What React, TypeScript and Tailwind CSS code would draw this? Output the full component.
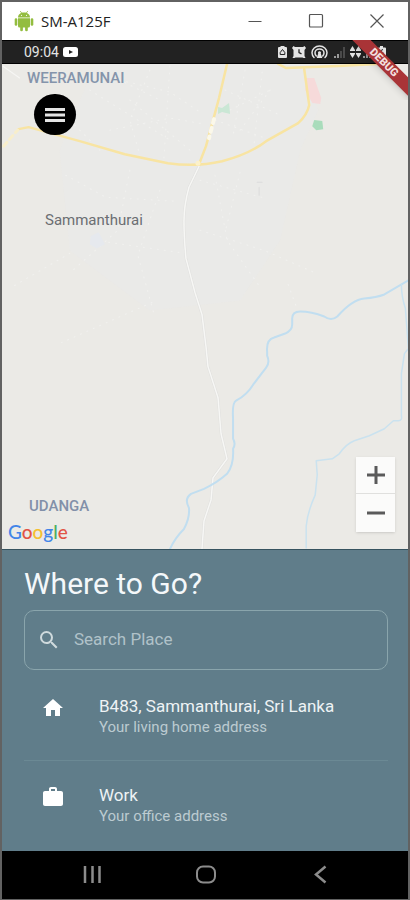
import { useState } from "react";
import { MdHome, MdSearch, MdWork } from "react-icons/md";
import type { IconType } from "react-icons";

type Place = {
  icon: IconType;
  title: string;
  subtitle: string;
};

const places: Place[] = [
  { icon: MdHome, title: "B483, Sammanthurai, Sri Lanka", subtitle: "Your living home address" },
  { icon: MdWork, title: "Work", subtitle: "Your office address" },
];

function AndroidRobot() {
  return (
    <svg className="h-[22px] w-5" viewBox="0 0 20 22" fill="#93bd3f">
      <path d="M6.2 1l1.600 2.200M13.800 1l-1.600 2.200" stroke="#93bd3f" strokeWidth=".8" />
      <path d="M4 7.500C4 4.500 6.500 2.500 10 2.500s6 2 6 5z" />
      <path d="M4 8.300h12V16a1.500 1.500 0 01-1.500 1.500h-9A1.500 1.500 0 014 16z" />
      <rect x=".7" y="8.200" width="2.600" height="7.500" rx="1.300" />
      <rect x="16.700" y="8.200" width="2.600" height="7.500" rx="1.300" />
      <rect x="6.200" y="15" width="2.700" height="6.300" rx="1.300" />
      <rect x="11.100" y="15" width="2.700" height="6.300" rx="1.300" />
      <circle cx="7.500" cy="5.300" r=".6" fill="#fff" />
      <circle cx="12.500" cy="5.300" r=".6" fill="#fff" />
    </svg>
  );
}

function TitleBar() {
  return (
    <header className="flex h-[38px] items-center justify-between bg-white pl-3 pr-[23px]">
      <div className="flex items-center gap-[7px]">
        <AndroidRobot />
        <h1 className="font-['Open_Sans',sans-serif] text-[15px] leading-5 text-[#222]">SM-A125F</h1>
      </div>
      <div className="flex items-center gap-[45px] text-[#555]">
        <button type="button" aria-label="Minimize">
          <svg className="size-4" viewBox="0 0 16 16" fill="none" stroke="currentColor">
            <path d="M1.5 8.5h13" />
          </svg>
        </button>
        <button type="button" aria-label="Maximize">
          <svg className="size-4" viewBox="0 0 16 16" fill="none" stroke="currentColor">
            <rect x="1.5" y="1.500" width="13" height="12.500" rx="1" strokeWidth="1.2" />
          </svg>
        </button>
        <button type="button" aria-label="Close">
          <svg className="size-4" viewBox="0 0 16 16" fill="none" stroke="currentColor">
            <path d="M1.5 1.5l13 13M14.5 1.5l-13 13" strokeWidth="1.2" />
          </svg>
        </button>
      </div>
    </header>
  );
}

function StatusBar() {
  return (
    <div className="flex h-6 items-center justify-between border-y border-black bg-[#222] pl-[22px] pr-5 text-[#e4e4e4]">
      <div className="flex items-center gap-1">
        <span className="text-sm leading-5">09:04</span>
        <svg className="h-[10px] w-[15px]" viewBox="0 0 15 10">
          <rect width="15" height="10" rx="2.5" fill="#fff" />
          <path d="M6 3l4 2-4 2z" fill="#222" />
        </svg>
      </div>
      <svg className="h-[14px] w-[111px]" viewBox="0 0 111 14" fill="currentColor">
        {/* battery saver */}
        <path d="M3.500 1h4v1H9a1 1 0 011 1v9a1 1 0 01-1 1H2a1 1 0 01-1-1V3a1 1 0 011-1h1.500z" />
        <path d="M5.500 4.500l2.300 3v2H3.200v-2z" fill="none" stroke="#222" />
        {/* alarm */}
        <path d="M18 2h8l1.500-1 1.500 2-1.500 2v6l1 2h-2l-1-.5h-7l-1 .5h-2l1-2V5L15 3l1.500-2z" />
        <path d="M22 4.200v3.300l2.500 1.300" fill="none" stroke="#222" strokeWidth="1.3" />
        {/* hotspot */}
        <g fill="none" stroke="currentColor" strokeWidth="1.500" strokeLinecap="round">
          <path d="M37 12.500a6.800 6.800 0 01-2-4.700 7.500 6.800 0 0115 0 6.800 6.800 0 01-2 4.700" />
          <path d="M39.300 11a4.500 4.500 0 01-1.300-3 4.500 4 0 019 0 4.500 4.500 0 01-1.300 3" />
        </g>
        <path d="M42.500 6.300a1.500 1.500 0 011.300 2.300l1.500 4.400h-5.600l1.500-4.400a1.500 1.500 0 011.300-2.300z" />
        {/* signal 1 */}
        <path d="M57 11h2v2h-2zM60 9h2v4h-2z" fill="#999" />
        <path d="M63 6h2v7h-2zM66 2h2v11h-2z" fill="#4a4a4a" />
        {/* data arrows */}
        <path d="M73 5l2.500-4L78 5v1h-5zM79 5l2.500-4L84 5v1h-5zM73 9l2.500 4L78 9V8h-5zM79 9l2.500 4L84 9V8h-5z" />
        {/* signal 2 */}
        <path d="M86 11h2v2h-2zM89 9h2v4h-2zM92 6h2v7h-2z" fill="#999" />
        {/* battery */}
        <path d="M103 1h3v1.500h2a1 1 0 011 1V12a1 1 0 01-1 1h-6a1 1 0 01-1-1V3.500a1 1 0 011-1h1z" />
        <path d="M105.500 4l-2 4h3l-2 4" fill="none" stroke="#222" />
      </svg>
    </div>
  );
}

function DebugBanner() {
  return (
    <div className="pointer-events-none absolute right-0 top-0 size-[60px] overflow-hidden">
      <div className="absolute -right-[26px] top-4 w-[100px] rotate-45 bg-[#a93437] text-center text-[11px] font-black leading-[13px] text-[#f3dede] shadow-md">
        DEBUG
      </div>
    </div>
  );
}

function MapArt() {
  return (
    <svg
      className="absolute inset-0 size-full"
      viewBox="2 64 406 484"
      preserveAspectRatio="xMidYMid slice"
      fill="none"
      strokeLinecap="round"
      strokeLinejoin="round"
    >
      <rect x="2" y="64" width="406" height="484" fill="#ebeae6" />
      <path d="M95 64H300L318 110 300 150 280 240 240 300 150 310 70 250 60 150z" fill="#eaeaea" opacity=".6" />

      {/* side streets */}
      <g stroke="#f1f1ef" strokeDasharray="1 6">
        <path d="M60 110l40 40M120 80l50 12 30 20M150 70l-20 50 10 35M110 130l60-12 35 6M215 120l50 18M225 90l55 25M245 70l-12 65M262 72l-8 72M170 66l-6 92" />
        <path d="M90 90l80 50M100 70l60 30M130 100l60 50M230 110l40-20M240 130l30-40" />
        <path d="M66 175l40 22 70 4M130 170l-12 60-45 40M160 190l-22 65 16 58M200 180l65 18M215 175l12 65 34 48M240 172l-14 56M200 230l64 20 50 22M288 284l8 22M15 285l55-32M95 240l84 12M152 302l-90 40" />
      </g>
      <path d="M3 66l17 12" stroke="#f6f6f4" />
      <path d="M257 182h5M259 187v8" stroke="#dcdcdc" />
      <path d="M91 236l8-4 6 12-8 4-7-4z" fill="#e6e9ee" />

      {/* parks and hospital */}
      <path d="M306 78l8 0 7 20-1 6-8-1-7-13z" fill="#f6dada" />
      <path d="M314 120l8 1 1 8-7 1-4-4z" fill="#a9dcbb" />
      <path d="M218 107l4 1 7-5 1 11-8-2-4 2z" fill="#cae7d5" />

      {/* main roads */}
      <path d="M200 164l-11 23q-5 18-5 34t2 37l9 34 7 22 4 32 2 20 10 31 3 36 6 25-14 19-2 22-7 21-2 28" stroke="#e0e0de" strokeWidth="2.500" />
      <path d="M200 164l-11 23q-5 18-5 34t2 37l9 34 7 22 4 32 2 20 10 31 3 36 6 25-14 19-2 22-7 21-2 28" stroke="#f7f7f5" strokeWidth="1.500" />
      <g stroke="#f8e4a2" strokeWidth="2.500">
        <path d="M19 129l10-2 51 14 45 13 43 9q28 4 54-2 27-7 44-20l32-18q9-8 11-18l-5-36" />
        <path d="M278 64l8 4 52-2 38-2" />
        <path d="M227 64l-8 34-13 48-7 18" />
      </g>
      <path d="M4 146l14-16" stroke="#f8eecb" strokeWidth="3" strokeDasharray="5 4" />
      <path d="M214 119l-5 19" stroke="#fbf8ea" strokeWidth="4" strokeDasharray="4 5" />
      <circle cx="198" cy="163" r="2.500" fill="#fcf1ca" />

      {/* rivers */}
      <path
        d="M408 280l-24 14q-8 3-20 4t-27 18q-6 5-13 0-13-5-24-5-8 0-8 7v6q0 6-7 9l-11 4q-8 2-7 14v4q3 7-1 12l-13 17q-6 10-17 16-4 2-3 18v20q3 5 0 10 1 16-6 25-10 9-23 15l-13 5q-7 5-2 14 1 10-5 21-11 11-16 25"
        stroke="#c1def0"
        strokeWidth="2"
      />
      <path
        d="M401 284q0 12 4 24l3 40-4 5-3 20v42q1 5-3 5h-5l-9 8-15 7-15 5q-8 3-15 13l-7 5-16 2 1 14-2 20q-8 18-9 31v22"
        stroke="#cae2ef"
        strokeWidth="1.500"
      />
    </svg>
  );
}

function MapView() {
  const [zoom, setZoom] = useState(13);

  return (
    <section aria-label="Map" data-zoom={zoom} className="relative min-h-[320px] flex-1 overflow-hidden bg-[#ebeae6]">
      <MapArt />
      <span className="absolute left-[25px] top-[4px] text-[15px] font-medium leading-5 text-[#8494ab]">WEERAMUNAI</span>
      <span className="absolute left-[43px] top-[146px] text-[15px] leading-5 text-[#6b6e72]">Sammanthurai</span>
      <span className="absolute bottom-[33px] left-[27px] text-[15px] font-medium leading-5 text-[#8290a9]">UDANGA</span>

      <button
        type="button"
        aria-label="Open menu"
        className="absolute left-8 top-[30px] flex h-[41px] w-[42px] items-center justify-center rounded-full bg-black text-[#e4e4e4]"
      >
        <svg className="h-4 w-5" viewBox="0 0 20 16" fill="currentColor">
          <path d="M0 1h20v3H0zM0 6.500h20v3H0zM0 12h20v3H0z" />
        </svg>
      </button>

      <a
        href="#google"
        aria-label="Google"
        className="absolute bottom-[5px] left-[6px] font-['Lato',sans-serif] text-[19px] font-medium leading-6"
      >
        <span className="text-[#4285e8]">G</span>
        <span className="text-[#e25345]">o</span>
        <span className="text-[#f5c030]">o</span>
        <span className="text-[#4285e8]">g</span>
        <span className="text-[#4caf61]">l</span>
        <span className="text-[#e25345]">e</span>
      </a>

      <div className="absolute bottom-[17px] right-[13px] flex w-[39px] flex-col divide-y divide-[#e0e0de] bg-[#fbfbfa] text-[#5a5a5a] shadow">
        <button
          type="button"
          aria-label="Zoom in"
          className="flex h-[37px] items-center justify-center"
          onClick={() => setZoom((z) => z + 1)}
        >
          <svg className="size-[18px]" viewBox="0 0 18 18" stroke="currentColor" strokeWidth="3">
            <path d="M0 9h18M9 0v18" />
          </svg>
        </button>
        <button
          type="button"
          aria-label="Zoom out"
          className="flex h-[38px] items-center justify-center"
          onClick={() => setZoom((z) => z - 1)}
        >
          <svg className="size-[18px]" viewBox="0 0 18 18" stroke="currentColor" strokeWidth="3">
            <path d="M0 9h18" />
          </svg>
        </button>
      </div>
    </section>
  );
}

function PlaceRow({ icon: Icon, title, subtitle }: Place) {
  return (
    <li>
      <button type="button" className="flex w-full items-start pl-[17px] text-left">
        <Icon className="size-6 shrink-0 text-white" />
        <span className="ml-[34px] flex flex-col">
          <span className="text-[17px] leading-5 text-[#eef3f5]">{title}</span>
          <span className="text-[15px] leading-[22px] text-[#bccbd1]">{subtitle}</span>
        </span>
      </button>
    </li>
  );
}

function SearchPanel() {
  const [query, setQuery] = useState("");

  return (
    <section className="border-t border-[#36535f] bg-[#607d8a] pb-6 pl-[22px] pr-5 pt-4">
      <h2 className="text-[30px] leading-9 text-[#f4f8fa]">Where to Go?</h2>
      <label className="mt-2 flex h-[60px] items-center rounded-[10px] border border-[#8aa5ac] pl-3">
        <MdSearch className="size-6 shrink-0 text-[#cfdadd]" />
        <input
          type="text"
          aria-label="Search Place"
          placeholder="Search Place"
          value={query}
          onChange={(e) => setQuery(e.target.value)}
          className="ml-[13px] min-w-0 flex-1 bg-transparent text-[17px] text-white outline-none placeholder:text-[#b0c2c9]"
        />
      </label>
      <ul className="mt-[26px] divide-y divide-[#6b8994] [&>li+li]:pt-6 [&>li:not(:last-child)]:pb-[22px]">
        {places.map((p) => (
          <PlaceRow key={p.title} {...p} />
        ))}
      </ul>
    </section>
  );
}

function NavBar() {
  return (
    <nav className="flex h-12 items-center justify-between bg-black pl-20 pr-[78px] text-[#8c8c8c]">
      <button type="button" aria-label="Recent apps">
        <svg className="size-5" viewBox="0 0 20 20" stroke="currentColor" strokeWidth="2.500">
          <path d="M3 1v17M10.500 1v17M17.500 1v17" />
        </svg>
      </button>
      <button type="button" aria-label="Home">
        <svg className="size-5" viewBox="0 0 20 20" fill="none" stroke="currentColor" strokeWidth="2">
          <rect x="1" y="1.500" width="18" height="16" rx="6" />
        </svg>
      </button>
      <button type="button" aria-label="Back">
        <svg className="size-5" viewBox="0 0 20 20" fill="none" stroke="currentColor" strokeWidth="2.500">
          <path d="M15.500 1.500L6 9.500l9.500 8" />
        </svg>
      </button>
    </nav>
  );
}

export default function App() {
  return (
    <div className="flex min-h-screen flex-col border-x-2 border-t-2 border-b border-[#626262] bg-[#2b2b2b] font-['Roboto',sans-serif]">
      <TitleBar />
      <main className="relative flex flex-1 flex-col">
        <StatusBar />
        <MapView />
        <SearchPanel />
        <NavBar />
        <DebugBanner />
      </main>
    </div>
  );
}
